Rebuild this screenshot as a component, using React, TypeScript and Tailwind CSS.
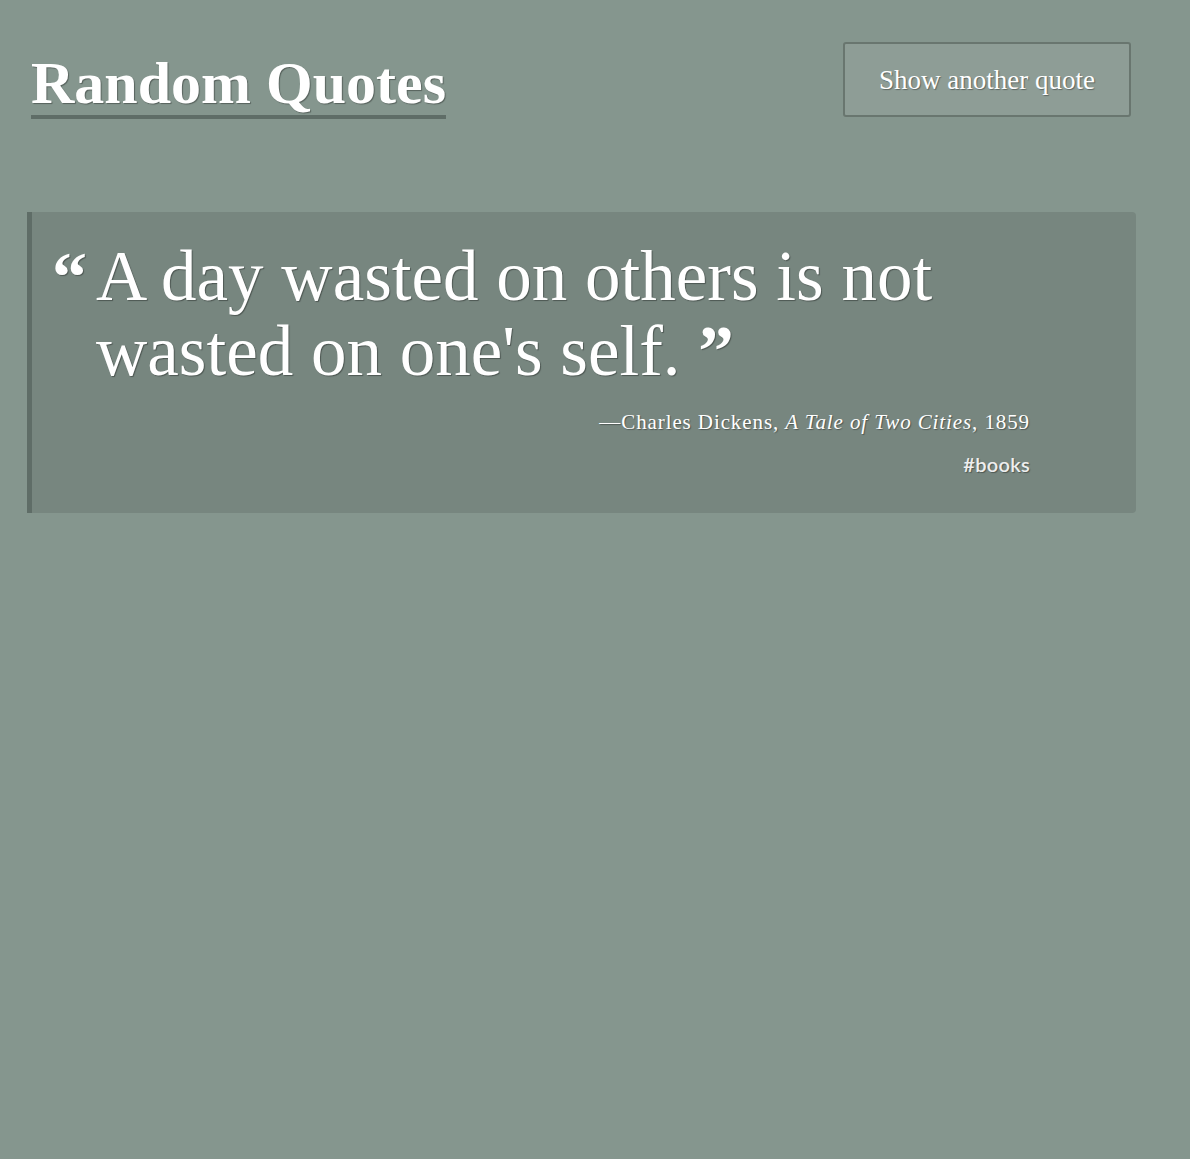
import React from 'react'

const serif = "font-['Liberation_Serif',serif]"
const shadow = '[text-shadow:1px_1px_1px_rgba(0,0,0,0.35)]'

const App = () => {
    return (
        <div className={`min-h-[1159px] w-full bg-[#85968e] text-white ${serif}`}>
            <div className="flex flex-row items-start justify-between pl-[31px] pr-[59px] pt-[42px]">
                <h1 className={`mt-[11px] border-b-4 border-[#5f6d67] pb-[2px] text-[60px] leading-[60px] font-bold ${shadow}`}>
                    Random Quotes
                </h1>
                <button className={`h-[75px] w-[288px] rounded-[3px] border-2 border-[#69766f] bg-[#8e9d96] pt-[2px] text-[27px] ${shadow}`}>
                    Show another quote
                </button>
            </div>

            <div className="ml-[27px] mt-[93px] w-[1109px] rounded-r-[4px] border-l-[5px] border-[#5f6d67] bg-[#77867f] pb-[36px] pl-[20px] pr-[106px] pt-[27px]">
                <div className="flex flex-row">
                    <span className={`w-[44px] shrink-0 text-[70px] leading-[75px] font-bold ${shadow}`}>
                        &ldquo;
                    </span>
                    <p className={`text-[71px] leading-[75px] ${shadow}`}>
                        A day wasted on others is not wasted on one's self. <b>&rdquo;</b>
                    </p>
                </div>
                <p className={`mt-[19px] text-right text-[21px] leading-[28px] tracking-[0.9px] ${shadow}`}>
                    &mdash;Charles Dickens, <i>A Tale of Two Cities</i>, 1859
                </p>
                <p className={`mt-[16px] text-right font-['Lato',sans-serif] text-[20px] leading-[25px] font-semibold tracking-[0.3px] text-[#eeeeee] ${shadow}`}>
                    #books
                </p>
            </div>
        </div>
    )
}

export default App
